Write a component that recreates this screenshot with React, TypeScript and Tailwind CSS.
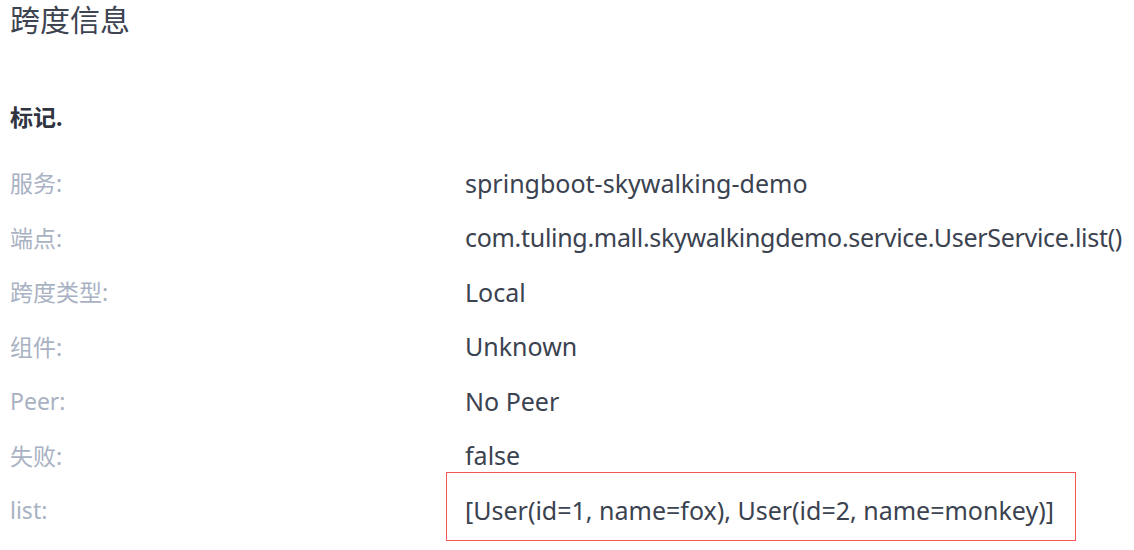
import React from 'react';

const rows: { label: string; value: string; mark?: boolean; tight?: boolean }[] = [
  { label: '服务:', value: 'springboot-skywalking-demo' },
  { label: '端点:', value: 'com.tuling.mall.skywalkingdemo.service.UserService.list()', tight: true },
  { label: '跨度类型:', value: 'Local' },
  { label: '组件:', value: 'Unknown' },
  { label: 'Peer:', value: 'No Peer' },
  { label: '失败:', value: 'false' },
  { label: 'list:', value: '[User(id=1, name=fox), User(id=2, name=monkey)]', mark: true },
];

const App: React.FC = () => {
  return (
    <div
      className="w-[1134px] h-[550px] bg-white overflow-hidden pl-[10px]"
      style={{ fontFamily: '"Noto Sans", "Noto Sans CJK SC", sans-serif' }}
    >
      <h2 className="text-[30px] leading-[40px] text-[#3d4350] font-normal">跨度信息</h2>
      <h3 className="mt-[57px] text-[23px] leading-[40px] font-bold text-[#2f3440]">标记.</h3>
      <div className="mt-[19px] flex flex-col">
        {rows.map((r) => (
          <div key={r.label} className="flex items-center h-[54.5px]">
            <div className="w-[455px] shrink-0 text-[23px] text-[#a9b2c3]">{r.label}</div>
            {r.mark ? (
              <div className="-ml-[19px] w-[630px] border-[1.5px] border-[#f45656] h-[69px] mt-[-8px] pl-[18px] flex items-center pt-[8px] text-[25px] text-[#3b4250] whitespace-nowrap">
                {r.value}
              </div>
            ) : (
              <div className={r.tight ? 'text-[25px] tracking-[-0.3px] text-[#3b4250] whitespace-nowrap' : 'text-[25px] text-[#3b4250] whitespace-nowrap'}>
                {r.value}
              </div>
            )}
          </div>
        ))}
      </div>
    </div>
  );
};

export default App;
